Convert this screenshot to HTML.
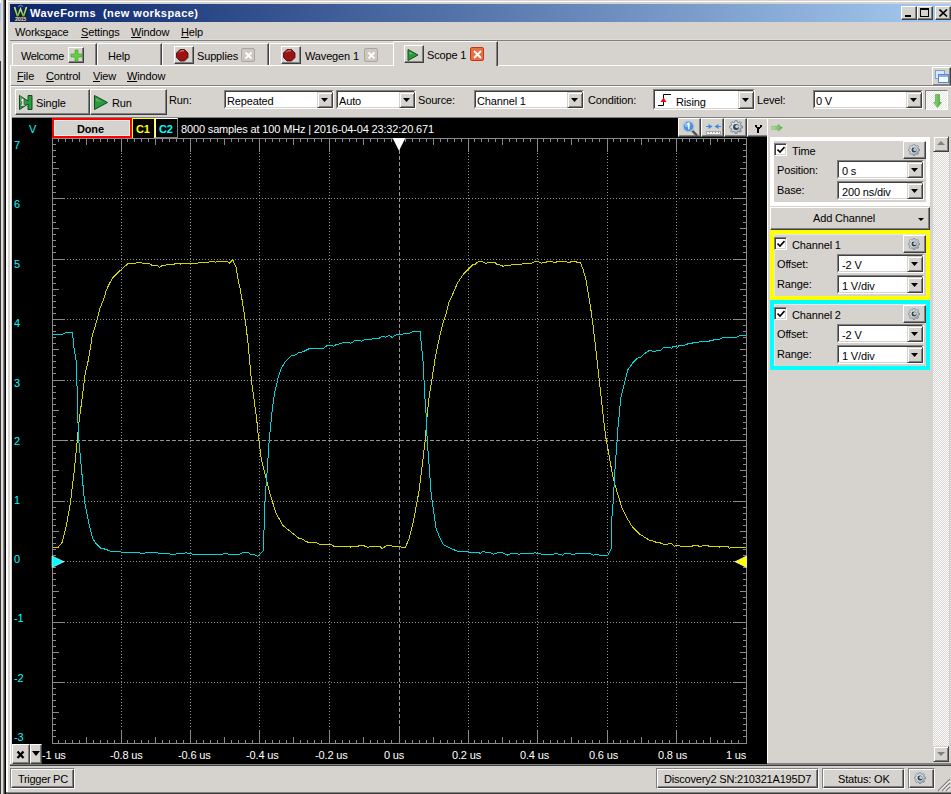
<!DOCTYPE html><html><head><meta charset="utf-8"><style>
*{margin:0;padding:0;box-sizing:border-box}
html,body{width:951px;height:794px;overflow:hidden;background:#d6d3ce;font-family:"Liberation Sans",sans-serif;font-size:11px}
body>div,body>svg{position:absolute}
.t{position:absolute;white-space:pre;line-height:13px;font-size:11px;letter-spacing:-0.15px}
.btn{position:absolute;background:#d6d3ce;border:1px solid;border-color:#fff #404040 #404040 #fff;box-shadow:inset -1px -1px #808080}
.btn2{position:absolute;background:#d6d3ce;border:1px solid;border-color:#d6d3ce #404040 #404040 #d6d3ce;box-shadow:inset 1px 1px #fff,inset -1px -1px #808080}
.cmb{position:absolute;background:#d6d3ce;border:1px solid;border-color:#808080 #fff #fff #808080}
.cin{position:absolute;left:0;top:0;background:#fff;border-left:1px solid #404040;border-top:1px solid #404040}
.dbtn{position:absolute;right:0;bottom:0;background:#d6d3ce;border:1px solid;border-color:#d6d3ce #404040 #404040 #d6d3ce;box-shadow:inset 1px 1px #fff,inset -1px -1px #808080}
.tri{position:absolute;left:3px;top:5px;width:0;height:0;border-left:4px solid transparent;border-right:4px solid transparent;border-top:4px solid #000}
u{text-decoration:underline;text-underline-offset:1px;text-decoration-skip-ink:none}
</style></head><body>

<div style="left:0px;top:0px;width:1px;height:3px;background:#fff;"></div>
<div style="left:0px;top:3px;width:1px;height:18px;background:#a6caf0;"></div>
<div style="left:0px;top:21px;width:1px;height:40px;background:#d6d3ce;"></div>
<div style="left:0px;top:61px;width:1px;height:733px;background:#383838;"></div>
<div style="left:1px;top:0px;width:2px;height:794px;background:#e0ddd8;"></div>
<div style="left:3px;top:0px;width:1px;height:794px;background:#808080;"></div>
<div style="left:4px;top:0px;width:1px;height:794px;background:#404040;"></div>
<div style="left:5px;top:0px;width:1px;height:794px;background:#000;"></div>
<div style="left:6px;top:0px;width:2px;height:794px;background:#fff;"></div>
<div style="left:8px;top:0px;width:2px;height:794px;background:#d6d3ce;"></div>
<div style="left:6px;top:1px;width:945px;height:1px;background:#fff;"></div>
<div style="left:10px;top:4px;width:941px;height:18px;background:linear-gradient(to right,#0a246a,#a6caf0);"></div>
<svg style="left:12px;top:4px" width="17" height="18" viewBox="0 0 17 18">
<defs><linearGradient id="wg" x1="0" y1="0" x2="0" y2="1"><stop offset="0" stop-color="#d8f0a0"/><stop offset="1" stop-color="#60b040"/></linearGradient></defs>
<path d="M2 3 L5.5 14 L8.5 6 L11.5 14 L15 3" stroke="#1a1a1a" stroke-width="3" fill="none" stroke-linejoin="round"/>
<path d="M2.5 3 L5.5 12.5 L8.5 5 L11.5 12.5 L14.5 3" stroke="url(#wg)" stroke-width="1.6" fill="none"/>
<path d="M6 2.5 Q8.5 0 11 2.5" stroke="#909090" stroke-width="1" fill="none"/>
<rect x="2" y="12.5" width="13" height="5" rx="2" fill="#1a1a1a"/>
<text x="8.5" y="17" font-size="5.5" font-family="Liberation Sans" font-weight="bold" fill="#e0e0e0" text-anchor="middle" letter-spacing="-0.3">2015</text>
</svg>
<div class="t" style="left:30px;top:7px;color:#fff;font-weight:bold;font-size:11px;letter-spacing:0.45px">WaveForms&nbsp; (new workspace)</div>
<div class="btn" style="left:901px;top:6px;width:16px;height:14px"><div style="position:absolute;left:3px;top:8px;width:6px;height:2px;background:#000"></div></div>
<div class="btn" style="left:917px;top:6px;width:16px;height:14px"><div style="position:absolute;left:2px;top:1px;width:9px;height:9px;border:1px solid #000;border-top-width:2px"></div></div>
<div class="btn" style="left:935px;top:6px;width:16px;height:14px"><svg style="position:absolute;left:3px;top:2px" width="9" height="8"><path d="M0.5 0.5 L8 7.5 M8 0.5 L0.5 7.5" stroke="#000" stroke-width="1.6"/></svg></div>
<div class="t" style="left:15px;top:26px;color:#000;font-size:11px;">Works<u>p</u>ace</div>
<div class="t" style="left:81px;top:26px;color:#000;font-size:11px;"><u>S</u>ettings</div>
<div class="t" style="left:131px;top:26px;color:#000;font-size:11px;"><u>W</u>indow</div>
<div class="t" style="left:181px;top:26px;color:#000;font-size:11px;"><u>H</u>elp</div>
<div style="left:10px;top:40px;width:941px;height:1px;background:#808080;"></div>
<div style="left:10px;top:39px;width:941px;height:1px;background:#dedbd6;"></div>
<div style="left:10px;top:41px;width:941px;height:1px;background:#dedbd6;"></div>
<div style="left:12px;top:43px;width:85px;height:22px;background:#d6d3ce;border-left:1px solid #fff;border-top:1px solid #fff;border-right:1px solid #404040;box-shadow:inset -1px 0 #808080;border-top-left-radius:2px"></div>
<div class="t" style="left:21px;top:50px;color:#000;font-size:11px;letter-spacing:-0.4px">Welcome</div>
<div class="btn" style="left:68px;top:47px;width:16px;height:16px"><svg style="position:absolute;left:1px;top:1px" width="13" height="13"><path d="M5 1 H8 V5 H12 V8 H8 V12 H5 V8 H1 V5 H5 Z" fill="#60d040" stroke="#40a020" stroke-width="0.6"/></svg></div>
<div style="left:97px;top:43px;width:65px;height:22px;background:#d6d3ce;border-left:1px solid #fff;border-top:1px solid #fff;border-right:1px solid #404040;box-shadow:inset -1px 0 #808080;border-top-left-radius:2px"></div>
<div class="t" style="left:108px;top:50px;color:#000;font-size:11px;">Help</div>
<div style="left:162px;top:43px;width:107px;height:22px;background:#d6d3ce;border-left:1px solid #fff;border-top:1px solid #fff;border-right:1px solid #404040;box-shadow:inset -1px 0 #808080;border-top-left-radius:2px"></div>
<div class="btn" style="left:174px;top:46px;width:20px;height:18px"><svg style="position:absolute;left:1px;top:2px" width="13" height="13"><path d="M4 0.5 H8.5 L12 4 V8.5 L8.5 12 H4 L0.5 8.5 V4 Z" fill="#9a1414" stroke="#3a0808" stroke-width="0.8"/><path d="M3.5 3 L5 1.8 H8" stroke="#e89090" stroke-width="1" fill="none"/></svg></div>
<div class="t" style="left:197px;top:50px;color:#000;font-size:11px;">Supplies</div>
<div style="left:241px;top:48px;width:14px;height:14px;background:#cdc9c1;border:1px solid #aaa69e;border-radius:2px"><svg style="position:absolute;left:2px;top:2px" width="9" height="9"><path d="M1.5 1.5 L7.5 7.5 M7.5 1.5 L1.5 7.5" stroke="#fff" stroke-width="1.8"/></svg></div>
<div style="left:269px;top:43px;width:125px;height:22px;background:#d6d3ce;border-left:1px solid #fff;border-top:1px solid #fff;border-top-left-radius:2px"></div>
<div class="btn" style="left:281px;top:46px;width:20px;height:18px"><svg style="position:absolute;left:1px;top:2px" width="13" height="13"><path d="M4 0.5 H8.5 L12 4 V8.5 L8.5 12 H4 L0.5 8.5 V4 Z" fill="#9a1414" stroke="#3a0808" stroke-width="0.8"/><path d="M3.5 3 L5 1.8 H8" stroke="#e89090" stroke-width="1" fill="none"/></svg></div>
<div class="t" style="left:305px;top:50px;color:#000;font-size:11px;">Wavegen 1</div>
<div style="left:364px;top:48px;width:14px;height:14px;background:#cdc9c1;border:1px solid #aaa69e;border-radius:2px"><svg style="position:absolute;left:2px;top:2px" width="9" height="9"><path d="M1.5 1.5 L7.5 7.5 M7.5 1.5 L1.5 7.5" stroke="#fff" stroke-width="1.8"/></svg></div>
<div style="left:10px;top:65px;width:941px;height:1px;background:#fff;"></div>
<div style="left:393px;top:41px;width:105px;height:25px;background:#d6d3ce;border-left:1px solid #fff;border-top:1px solid #fff;border-right:1px solid #404040;box-shadow:inset -1px 0 #808080;border-top-left-radius:2px"></div>
<div class="btn" style="left:404px;top:45px;width:20px;height:18px"><svg style="position:absolute;left:2px;top:3px" width="12" height="12"><path d="M1 0.5 L11 6 L1 11.5 Z" fill="#2a9a3a" stroke="#105020" stroke-width="1"/><path d="M2.5 3 L6 5 H2.5 Z" fill="#7ac88a"/></svg></div>
<div class="t" style="left:427px;top:49px;color:#000;font-size:11px;">Scope 1</div>
<div style="left:470px;top:47px;width:14px;height:14px;background:#e87040;border:1px solid #d03010;border-radius:2px"><svg style="position:absolute;left:2px;top:2px" width="9" height="9"><path d="M1 1 L8 8 M8 1 L1 8" stroke="#fff" stroke-width="2"/></svg></div>
<div style="left:10px;top:65px;width:1px;height:700px;background:#fff;"></div>
<div class="t" style="left:17px;top:70px;color:#000;font-size:11px;"><u>F</u>ile</div>
<div class="t" style="left:46px;top:70px;color:#000;font-size:11px;"><u>C</u>ontrol</div>
<div class="t" style="left:93px;top:70px;color:#000;font-size:11px;"><u>V</u>iew</div>
<div class="t" style="left:127px;top:70px;color:#000;font-size:11px;"><u>W</u>indow</div>
<div class="btn" style="left:932px;top:67px;width:19px;height:19px"><svg style="position:absolute;left:1px;top:1px" width="15" height="15"><rect x="1.5" y="1.5" width="9" height="8" fill="#dce8f8" stroke="#7aa0d8"/><rect x="4.5" y="5.5" width="10" height="8" fill="#f4f8ff" stroke="#5a88d0"/><rect x="5" y="6" width="9" height="2" fill="#8ab0e8"/></svg></div>
<div style="left:11px;top:85px;width:940px;height:1px;background:#808080;"></div>
<div style="left:11px;top:86px;width:940px;height:1px;background:#fff;"></div>
<div class="btn" style="left:15px;top:89px;width:75px;height:26px;"></div>
<svg style="left:18px;top:94px" width="16" height="17"><path d="M1.5 1.5 L10 7 V1.5 H14 V15.5 H10 V10 L1.5 15.5 Z" fill="#2a9a3a" stroke="#104a20" stroke-width="1"/><path d="M2 2 L6 5 V9 H2 Z" fill="#6cc07a" opacity="0.7"/><path d="M2.5 6 L4.5 4.5 H5.8 V10.5 H7 V12 H2.5 V10.5 H3.8 V7 L2.5 7.5 Z" fill="#f4f4f4" stroke="#304030" stroke-width="0.5"/></svg>
<div class="t" style="left:36px;top:97px;color:#000;font-size:11px;">Single</div>
<div class="btn" style="left:90px;top:89px;width:77px;height:26px;"></div>
<svg style="left:93px;top:94px" width="16" height="17"><path d="M1.5 1.5 L14.5 8.5 L1.5 15.5 Z" fill="#2a9a3a" stroke="#104a20" stroke-width="1"/><path d="M3 4 L9 7.5 L3 7.5 Z" fill="#70c080" opacity="0.6"/></svg>
<div class="t" style="left:112px;top:97px;color:#000;font-size:11px;">Run</div>
<div class="t" style="left:169px;top:94px;color:#000;font-size:11px;">Run:</div>
<div class="cmb" style="left:224px;top:90px;width:110px;height:19px;"><div class="cin" style="width:107px;height:16px"></div><div class="dbtn" style="width:16px;height:16px"><svg style="position:absolute;left:3px;top:5px" width="7" height="4"><path d="M0 0H7L3.5 4Z" fill="#000"/></svg></div><div class="t" style="left:2px;top:4px">Repeated</div></div>
<div class="cmb" style="left:336px;top:90px;width:80px;height:19px;"><div class="cin" style="width:77px;height:16px"></div><div class="dbtn" style="width:16px;height:16px"><svg style="position:absolute;left:3px;top:5px" width="7" height="4"><path d="M0 0H7L3.5 4Z" fill="#000"/></svg></div><div class="t" style="left:2px;top:4px">Auto</div></div>
<div class="t" style="left:418px;top:94px;color:#000;font-size:11px;">Source:</div>
<div class="cmb" style="left:474px;top:90px;width:110px;height:19px;"><div class="cin" style="width:107px;height:16px"></div><div class="dbtn" style="width:16px;height:16px"><svg style="position:absolute;left:3px;top:5px" width="7" height="4"><path d="M0 0H7L3.5 4Z" fill="#000"/></svg></div><div class="t" style="left:2px;top:4px">Channel 1</div></div>
<div class="t" style="left:588px;top:94px;color:#000;font-size:11px;">Condition:</div>
<div class="cmb" style="left:653px;top:89px;width:102px;height:21px;"><div class="cin" style="width:99px;height:18px"></div><div class="dbtn" style="width:16px;height:18px"><svg style="position:absolute;left:3px;top:6px" width="7" height="4"><path d="M0 0H7L3.5 4Z" fill="#000"/></svg></div><div class="t" style="left:2px;top:6px"><span style="display:inline-block;width:20px"></span>Rising</div></div>
<svg style="left:657px;top:93px" width="17" height="14"><path d="M1 12.5 H6.5 V1.5 H14" stroke="#000" stroke-width="1" fill="none"/><path d="M6.5 4.5 L9.5 9 H3.5 Z" fill="#f00"/></svg>
<div class="t" style="left:757px;top:94px;color:#000;font-size:11px;">Level:</div>
<div class="cmb" style="left:813px;top:90px;width:110px;height:19px;"><div class="cin" style="width:107px;height:16px"></div><div class="dbtn" style="width:16px;height:16px"><svg style="position:absolute;left:3px;top:5px" width="7" height="4"><path d="M0 0H7L3.5 4Z" fill="#000"/></svg></div><div class="t" style="left:2px;top:4px">0 V</div></div>
<div style="left:925px;top:90px;width:23px;height:20px;border:1px solid;border-color:#808080 #fff #fff #808080;background-color:#e8e6e0;background-image:linear-gradient(45deg,#fff 25%,transparent 25%,transparent 75%,#fff 75%),linear-gradient(45deg,#fff 25%,transparent 25%,transparent 75%,#fff 75%);background-size:2px 2px;background-position:0 0,1px 1px"><svg style="position:absolute;left:7px;top:3px" width="9" height="15"><defs><linearGradient id="ga" x1="0" x2="1"><stop offset="0" stop-color="#98d888"/><stop offset="1" stop-color="#48a838"/></linearGradient></defs><path d="M2.5 0.5 H6.5 V8.5 H8.5 L4.5 13.5 L0.5 8.5 H2.5 Z" fill="url(#ga)" stroke="#48a040" stroke-width="0.6"/></svg></div>
<div style="left:12px;top:117px;width:939px;height:1px;background:#808080;"></div>
<div style="left:12px;top:118px;width:755px;height:646px;background:#000;"></div>
<div style="left:52px;top:118px;width:80px;height:20px;border:2px solid #f00;background:#d6d3ce;box-shadow:inset 1px 1px #e4f0f0,inset -1px -1px #e4f0f0"></div>
<div class="t" style="left:77px;top:123px;color:#000;font-weight:bold;font-size:11px;">Done</div>
<div style="left:132px;top:118px;width:23px;height:21px;border:1px solid #ff0;background:#000"></div>
<div class="t" style="left:136px;top:123px;color:#ff0;font-weight:bold;font-size:11px;">C1</div>
<div style="left:155px;top:118px;width:23px;height:20px;border:1px solid;border-color:#fff #808080 #808080 #fff;background:#000"></div>
<div class="t" style="left:159px;top:123px;color:#0ff;font-weight:bold;font-size:11px;">C2</div>
<div class="t" style="left:181px;top:123px;color:#fff;font-size:11px;">8000 samples at 100 MHz | 2016-04-04 23:32:20.671</div>
<div class="btn" style="left:678px;top:118px;width:23px;height:19px"><svg style="position:absolute;left:3px;top:1px" width="17" height="17"><path d="M10 10.5 L14.5 15" stroke="#505050" stroke-width="2.4" stroke-linecap="round"/><circle cx="6.5" cy="6.5" r="5.4" fill="#4a90e0" stroke="#b8c4d0" stroke-width="1.3"/><ellipse cx="5.5" cy="5" rx="3" ry="2.2" fill="#a8d0ff" opacity="0.7"/><path d="M5 4.2 L6.8 3.2 V9.5" stroke="#fff" stroke-width="1.3" fill="none"/></svg></div>
<div class="btn" style="left:701px;top:118px;width:23px;height:19px"><svg style="position:absolute;left:3px;top:3px" width="17" height="14"><path d="M1 4.5 H4" stroke="#3a8ae8" stroke-width="1"/><path d="M13 4.5 H16" stroke="#3a8ae8" stroke-width="1"/><path d="M7.5 4.5 L3.5 2 V7 Z M9.5 4.5 L13.5 2 V7 Z" fill="#3a8ae8"/><rect x="1.5" y="9.5" width="14" height="3" fill="#f4f4f4" stroke="#a8a8a8" stroke-width="1"/><path d="M4.5 10 V11 M7.5 10 V11 M10.5 10 V11 M13.5 10 V11" stroke="#909090"/></svg></div>
<div class="btn" style="left:724px;top:118px;width:23px;height:19px"><svg style="position:absolute;left:4px;top:1px" width="14" height="14" viewBox="0 0 13 13"><defs><linearGradient id="gg" x1="0" y1="0" x2="1" y2="1"><stop offset="0" stop-color="#f4f6f8"/><stop offset="0.6" stop-color="#c4ccd4"/><stop offset="1" stop-color="#7a8896"/></linearGradient></defs><path d="M10.78 5.10 L12.66 5.78 L12.66 7.22 L10.78 7.90 L10.51 8.53 L11.36 10.35 L10.35 11.36 L8.53 10.51 L7.90 10.78 L7.22 12.66 L5.78 12.66 L5.10 10.78 L4.47 10.51 L2.65 11.36 L1.64 10.35 L2.49 8.53 L2.22 7.90 L0.34 7.22 L0.34 5.78 L2.22 5.10 L2.49 4.47 L1.64 2.65 L2.65 1.64 L4.47 2.49 L5.10 2.22 L5.78 0.34 L7.22 0.34 L7.90 2.22 L8.53 2.49 L10.35 1.64 L11.36 2.65 L10.51 4.47Z" fill="url(#gg)" stroke="#6a7a88" stroke-width="0.8"/><circle cx="6.5" cy="6.5" r="2.7" fill="#2e4252"/><circle cx="7.4" cy="6.0" r="1.7" fill="#c8d0c4"/></svg></div>
<div style="left:747px;top:118px;width:20px;height:19px;background:#d6d3ce;border-left:1px solid #fff;border-top:1px solid #fff;border-bottom:1px solid #404040;box-shadow:inset 0 -1px #808080"><svg style="position:absolute;left:7px;top:6px" width="7" height="8" shape-rendering="crispEdges"><path d="M0 0H2V2H1Z M5 0H7V2H6Z" fill="#000"/><rect x="1" y="2" width="5" height="1" fill="#000"/><rect x="2" y="3" width="3" height="1" fill="#000"/><rect x="2" y="3" width="2" height="5" fill="#000"/><rect x="0" y="0" width="2" height="2" fill="#000"/><rect x="5" y="0" width="2" height="2" fill="#000"/></svg></div>
<svg style="left:771px;top:124px" width="13" height="8"><defs><linearGradient id="ar" x1="0" x2="1"><stop offset="0" stop-color="#b8e4a8"/><stop offset="1" stop-color="#58b048"/></linearGradient></defs><path d="M0.5 2.3 H7 V0.3 L11.5 3.8 L7 7.3 V5.3 H0.5 Z" fill="url(#ar)" stroke="#68b058" stroke-width="0.5"/></svg>
<svg style="left:0;top:0" width="951" height="794" shape-rendering="crispEdges"><rect x="52" y="138" width="1" height="606" fill="#8a8a8e"/><rect x="746" y="138" width="1" height="606" fill="#8a8a8e"/><rect x="52" y="138" width="695" height="1" fill="#8a8a8e"/><rect x="52" y="743" width="695" height="1" fill="#8a8a8e"/><rect x="53" y="144" width="3" height="1" fill="#8a8a8e"/><rect x="743" y="144" width="3" height="1" fill="#8a8a8e"/><rect x="53" y="150" width="3" height="1" fill="#8a8a8e"/><rect x="743" y="150" width="3" height="1" fill="#8a8a8e"/><rect x="53" y="156" width="3" height="1" fill="#8a8a8e"/><rect x="743" y="156" width="3" height="1" fill="#8a8a8e"/><rect x="53" y="162" width="3" height="1" fill="#8a8a8e"/><rect x="743" y="162" width="3" height="1" fill="#8a8a8e"/><rect x="53" y="168" width="6" height="1" fill="#8a8a8e"/><rect x="740" y="168" width="6" height="1" fill="#8a8a8e"/><rect x="53" y="174" width="3" height="1" fill="#8a8a8e"/><rect x="743" y="174" width="3" height="1" fill="#8a8a8e"/><rect x="53" y="180" width="3" height="1" fill="#8a8a8e"/><rect x="743" y="180" width="3" height="1" fill="#8a8a8e"/><rect x="53" y="186" width="3" height="1" fill="#8a8a8e"/><rect x="743" y="186" width="3" height="1" fill="#8a8a8e"/><rect x="53" y="192" width="3" height="1" fill="#8a8a8e"/><rect x="743" y="192" width="3" height="1" fill="#8a8a8e"/><rect x="53" y="198" width="12" height="1" fill="#8a8a8e"/><rect x="734" y="198" width="12" height="1" fill="#8a8a8e"/><rect x="53" y="204" width="3" height="1" fill="#8a8a8e"/><rect x="743" y="204" width="3" height="1" fill="#8a8a8e"/><rect x="53" y="210" width="3" height="1" fill="#8a8a8e"/><rect x="743" y="210" width="3" height="1" fill="#8a8a8e"/><rect x="53" y="216" width="3" height="1" fill="#8a8a8e"/><rect x="743" y="216" width="3" height="1" fill="#8a8a8e"/><rect x="53" y="222" width="3" height="1" fill="#8a8a8e"/><rect x="743" y="222" width="3" height="1" fill="#8a8a8e"/><rect x="53" y="228" width="6" height="1" fill="#8a8a8e"/><rect x="740" y="228" width="6" height="1" fill="#8a8a8e"/><rect x="53" y="234" width="3" height="1" fill="#8a8a8e"/><rect x="743" y="234" width="3" height="1" fill="#8a8a8e"/><rect x="53" y="240" width="3" height="1" fill="#8a8a8e"/><rect x="743" y="240" width="3" height="1" fill="#8a8a8e"/><rect x="53" y="246" width="3" height="1" fill="#8a8a8e"/><rect x="743" y="246" width="3" height="1" fill="#8a8a8e"/><rect x="53" y="252" width="3" height="1" fill="#8a8a8e"/><rect x="743" y="252" width="3" height="1" fill="#8a8a8e"/><rect x="53" y="259" width="12" height="1" fill="#8a8a8e"/><rect x="734" y="259" width="12" height="1" fill="#8a8a8e"/><rect x="53" y="265" width="3" height="1" fill="#8a8a8e"/><rect x="743" y="265" width="3" height="1" fill="#8a8a8e"/><rect x="53" y="271" width="3" height="1" fill="#8a8a8e"/><rect x="743" y="271" width="3" height="1" fill="#8a8a8e"/><rect x="53" y="277" width="3" height="1" fill="#8a8a8e"/><rect x="743" y="277" width="3" height="1" fill="#8a8a8e"/><rect x="53" y="283" width="3" height="1" fill="#8a8a8e"/><rect x="743" y="283" width="3" height="1" fill="#8a8a8e"/><rect x="53" y="289" width="6" height="1" fill="#8a8a8e"/><rect x="740" y="289" width="6" height="1" fill="#8a8a8e"/><rect x="53" y="295" width="3" height="1" fill="#8a8a8e"/><rect x="743" y="295" width="3" height="1" fill="#8a8a8e"/><rect x="53" y="301" width="3" height="1" fill="#8a8a8e"/><rect x="743" y="301" width="3" height="1" fill="#8a8a8e"/><rect x="53" y="307" width="3" height="1" fill="#8a8a8e"/><rect x="743" y="307" width="3" height="1" fill="#8a8a8e"/><rect x="53" y="313" width="3" height="1" fill="#8a8a8e"/><rect x="743" y="313" width="3" height="1" fill="#8a8a8e"/><rect x="53" y="319" width="12" height="1" fill="#8a8a8e"/><rect x="734" y="319" width="12" height="1" fill="#8a8a8e"/><rect x="53" y="325" width="3" height="1" fill="#8a8a8e"/><rect x="743" y="325" width="3" height="1" fill="#8a8a8e"/><rect x="53" y="331" width="3" height="1" fill="#8a8a8e"/><rect x="743" y="331" width="3" height="1" fill="#8a8a8e"/><rect x="53" y="337" width="3" height="1" fill="#8a8a8e"/><rect x="743" y="337" width="3" height="1" fill="#8a8a8e"/><rect x="53" y="343" width="3" height="1" fill="#8a8a8e"/><rect x="743" y="343" width="3" height="1" fill="#8a8a8e"/><rect x="53" y="349" width="6" height="1" fill="#8a8a8e"/><rect x="740" y="349" width="6" height="1" fill="#8a8a8e"/><rect x="53" y="355" width="3" height="1" fill="#8a8a8e"/><rect x="743" y="355" width="3" height="1" fill="#8a8a8e"/><rect x="53" y="361" width="3" height="1" fill="#8a8a8e"/><rect x="743" y="361" width="3" height="1" fill="#8a8a8e"/><rect x="53" y="367" width="3" height="1" fill="#8a8a8e"/><rect x="743" y="367" width="3" height="1" fill="#8a8a8e"/><rect x="53" y="373" width="3" height="1" fill="#8a8a8e"/><rect x="743" y="373" width="3" height="1" fill="#8a8a8e"/><rect x="53" y="380" width="12" height="1" fill="#8a8a8e"/><rect x="734" y="380" width="12" height="1" fill="#8a8a8e"/><rect x="53" y="386" width="3" height="1" fill="#8a8a8e"/><rect x="743" y="386" width="3" height="1" fill="#8a8a8e"/><rect x="53" y="392" width="3" height="1" fill="#8a8a8e"/><rect x="743" y="392" width="3" height="1" fill="#8a8a8e"/><rect x="53" y="398" width="3" height="1" fill="#8a8a8e"/><rect x="743" y="398" width="3" height="1" fill="#8a8a8e"/><rect x="53" y="404" width="3" height="1" fill="#8a8a8e"/><rect x="743" y="404" width="3" height="1" fill="#8a8a8e"/><rect x="53" y="410" width="6" height="1" fill="#8a8a8e"/><rect x="740" y="410" width="6" height="1" fill="#8a8a8e"/><rect x="53" y="416" width="3" height="1" fill="#8a8a8e"/><rect x="743" y="416" width="3" height="1" fill="#8a8a8e"/><rect x="53" y="422" width="3" height="1" fill="#8a8a8e"/><rect x="743" y="422" width="3" height="1" fill="#8a8a8e"/><rect x="53" y="428" width="3" height="1" fill="#8a8a8e"/><rect x="743" y="428" width="3" height="1" fill="#8a8a8e"/><rect x="53" y="434" width="3" height="1" fill="#8a8a8e"/><rect x="743" y="434" width="3" height="1" fill="#8a8a8e"/><rect x="53" y="440" width="12" height="1" fill="#8a8a8e"/><rect x="734" y="440" width="12" height="1" fill="#8a8a8e"/><rect x="53" y="446" width="3" height="1" fill="#8a8a8e"/><rect x="743" y="446" width="3" height="1" fill="#8a8a8e"/><rect x="53" y="452" width="3" height="1" fill="#8a8a8e"/><rect x="743" y="452" width="3" height="1" fill="#8a8a8e"/><rect x="53" y="458" width="3" height="1" fill="#8a8a8e"/><rect x="743" y="458" width="3" height="1" fill="#8a8a8e"/><rect x="53" y="464" width="3" height="1" fill="#8a8a8e"/><rect x="743" y="464" width="3" height="1" fill="#8a8a8e"/><rect x="53" y="470" width="6" height="1" fill="#8a8a8e"/><rect x="740" y="470" width="6" height="1" fill="#8a8a8e"/><rect x="53" y="476" width="3" height="1" fill="#8a8a8e"/><rect x="743" y="476" width="3" height="1" fill="#8a8a8e"/><rect x="53" y="482" width="3" height="1" fill="#8a8a8e"/><rect x="743" y="482" width="3" height="1" fill="#8a8a8e"/><rect x="53" y="488" width="3" height="1" fill="#8a8a8e"/><rect x="743" y="488" width="3" height="1" fill="#8a8a8e"/><rect x="53" y="494" width="3" height="1" fill="#8a8a8e"/><rect x="743" y="494" width="3" height="1" fill="#8a8a8e"/><rect x="53" y="501" width="12" height="1" fill="#8a8a8e"/><rect x="734" y="501" width="12" height="1" fill="#8a8a8e"/><rect x="53" y="507" width="3" height="1" fill="#8a8a8e"/><rect x="743" y="507" width="3" height="1" fill="#8a8a8e"/><rect x="53" y="513" width="3" height="1" fill="#8a8a8e"/><rect x="743" y="513" width="3" height="1" fill="#8a8a8e"/><rect x="53" y="519" width="3" height="1" fill="#8a8a8e"/><rect x="743" y="519" width="3" height="1" fill="#8a8a8e"/><rect x="53" y="525" width="3" height="1" fill="#8a8a8e"/><rect x="743" y="525" width="3" height="1" fill="#8a8a8e"/><rect x="53" y="531" width="6" height="1" fill="#8a8a8e"/><rect x="740" y="531" width="6" height="1" fill="#8a8a8e"/><rect x="53" y="537" width="3" height="1" fill="#8a8a8e"/><rect x="743" y="537" width="3" height="1" fill="#8a8a8e"/><rect x="53" y="543" width="3" height="1" fill="#8a8a8e"/><rect x="743" y="543" width="3" height="1" fill="#8a8a8e"/><rect x="53" y="549" width="3" height="1" fill="#8a8a8e"/><rect x="743" y="549" width="3" height="1" fill="#8a8a8e"/><rect x="53" y="555" width="3" height="1" fill="#8a8a8e"/><rect x="743" y="555" width="3" height="1" fill="#8a8a8e"/><rect x="53" y="561" width="12" height="1" fill="#8a8a8e"/><rect x="734" y="561" width="12" height="1" fill="#8a8a8e"/><rect x="53" y="567" width="3" height="1" fill="#8a8a8e"/><rect x="743" y="567" width="3" height="1" fill="#8a8a8e"/><rect x="53" y="573" width="3" height="1" fill="#8a8a8e"/><rect x="743" y="573" width="3" height="1" fill="#8a8a8e"/><rect x="53" y="579" width="3" height="1" fill="#8a8a8e"/><rect x="743" y="579" width="3" height="1" fill="#8a8a8e"/><rect x="53" y="585" width="3" height="1" fill="#8a8a8e"/><rect x="743" y="585" width="3" height="1" fill="#8a8a8e"/><rect x="53" y="591" width="6" height="1" fill="#8a8a8e"/><rect x="740" y="591" width="6" height="1" fill="#8a8a8e"/><rect x="53" y="597" width="3" height="1" fill="#8a8a8e"/><rect x="743" y="597" width="3" height="1" fill="#8a8a8e"/><rect x="53" y="603" width="3" height="1" fill="#8a8a8e"/><rect x="743" y="603" width="3" height="1" fill="#8a8a8e"/><rect x="53" y="609" width="3" height="1" fill="#8a8a8e"/><rect x="743" y="609" width="3" height="1" fill="#8a8a8e"/><rect x="53" y="615" width="3" height="1" fill="#8a8a8e"/><rect x="743" y="615" width="3" height="1" fill="#8a8a8e"/><rect x="53" y="622" width="12" height="1" fill="#8a8a8e"/><rect x="734" y="622" width="12" height="1" fill="#8a8a8e"/><rect x="53" y="628" width="3" height="1" fill="#8a8a8e"/><rect x="743" y="628" width="3" height="1" fill="#8a8a8e"/><rect x="53" y="634" width="3" height="1" fill="#8a8a8e"/><rect x="743" y="634" width="3" height="1" fill="#8a8a8e"/><rect x="53" y="640" width="3" height="1" fill="#8a8a8e"/><rect x="743" y="640" width="3" height="1" fill="#8a8a8e"/><rect x="53" y="646" width="3" height="1" fill="#8a8a8e"/><rect x="743" y="646" width="3" height="1" fill="#8a8a8e"/><rect x="53" y="652" width="6" height="1" fill="#8a8a8e"/><rect x="740" y="652" width="6" height="1" fill="#8a8a8e"/><rect x="53" y="658" width="3" height="1" fill="#8a8a8e"/><rect x="743" y="658" width="3" height="1" fill="#8a8a8e"/><rect x="53" y="664" width="3" height="1" fill="#8a8a8e"/><rect x="743" y="664" width="3" height="1" fill="#8a8a8e"/><rect x="53" y="670" width="3" height="1" fill="#8a8a8e"/><rect x="743" y="670" width="3" height="1" fill="#8a8a8e"/><rect x="53" y="676" width="3" height="1" fill="#8a8a8e"/><rect x="743" y="676" width="3" height="1" fill="#8a8a8e"/><rect x="53" y="682" width="12" height="1" fill="#8a8a8e"/><rect x="734" y="682" width="12" height="1" fill="#8a8a8e"/><rect x="53" y="688" width="3" height="1" fill="#8a8a8e"/><rect x="743" y="688" width="3" height="1" fill="#8a8a8e"/><rect x="53" y="694" width="3" height="1" fill="#8a8a8e"/><rect x="743" y="694" width="3" height="1" fill="#8a8a8e"/><rect x="53" y="700" width="3" height="1" fill="#8a8a8e"/><rect x="743" y="700" width="3" height="1" fill="#8a8a8e"/><rect x="53" y="706" width="3" height="1" fill="#8a8a8e"/><rect x="743" y="706" width="3" height="1" fill="#8a8a8e"/><rect x="53" y="712" width="6" height="1" fill="#8a8a8e"/><rect x="740" y="712" width="6" height="1" fill="#8a8a8e"/><rect x="53" y="718" width="3" height="1" fill="#8a8a8e"/><rect x="743" y="718" width="3" height="1" fill="#8a8a8e"/><rect x="53" y="724" width="3" height="1" fill="#8a8a8e"/><rect x="743" y="724" width="3" height="1" fill="#8a8a8e"/><rect x="53" y="730" width="3" height="1" fill="#8a8a8e"/><rect x="743" y="730" width="3" height="1" fill="#8a8a8e"/><rect x="53" y="736" width="3" height="1" fill="#8a8a8e"/><rect x="743" y="736" width="3" height="1" fill="#8a8a8e"/><rect x="58" y="139" width="1" height="3" fill="#8a8a8e"/><rect x="58" y="740" width="1" height="3" fill="#8a8a8e"/><rect x="65" y="139" width="1" height="3" fill="#8a8a8e"/><rect x="65" y="740" width="1" height="3" fill="#8a8a8e"/><rect x="72" y="139" width="1" height="3" fill="#8a8a8e"/><rect x="72" y="740" width="1" height="3" fill="#8a8a8e"/><rect x="79" y="139" width="1" height="3" fill="#8a8a8e"/><rect x="79" y="740" width="1" height="3" fill="#8a8a8e"/><rect x="86" y="139" width="1" height="6" fill="#8a8a8e"/><rect x="86" y="737" width="1" height="6" fill="#8a8a8e"/><rect x="93" y="139" width="1" height="3" fill="#8a8a8e"/><rect x="93" y="740" width="1" height="3" fill="#8a8a8e"/><rect x="100" y="139" width="1" height="3" fill="#8a8a8e"/><rect x="100" y="740" width="1" height="3" fill="#8a8a8e"/><rect x="107" y="139" width="1" height="3" fill="#8a8a8e"/><rect x="107" y="740" width="1" height="3" fill="#8a8a8e"/><rect x="114" y="139" width="1" height="3" fill="#8a8a8e"/><rect x="114" y="740" width="1" height="3" fill="#8a8a8e"/><rect x="121" y="139" width="1" height="13" fill="#8a8a8e"/><rect x="121" y="730" width="1" height="13" fill="#8a8a8e"/><rect x="127" y="139" width="1" height="3" fill="#8a8a8e"/><rect x="127" y="740" width="1" height="3" fill="#8a8a8e"/><rect x="134" y="139" width="1" height="3" fill="#8a8a8e"/><rect x="134" y="740" width="1" height="3" fill="#8a8a8e"/><rect x="141" y="139" width="1" height="3" fill="#8a8a8e"/><rect x="141" y="740" width="1" height="3" fill="#8a8a8e"/><rect x="148" y="139" width="1" height="3" fill="#8a8a8e"/><rect x="148" y="740" width="1" height="3" fill="#8a8a8e"/><rect x="155" y="139" width="1" height="6" fill="#8a8a8e"/><rect x="155" y="737" width="1" height="6" fill="#8a8a8e"/><rect x="162" y="139" width="1" height="3" fill="#8a8a8e"/><rect x="162" y="740" width="1" height="3" fill="#8a8a8e"/><rect x="169" y="139" width="1" height="3" fill="#8a8a8e"/><rect x="169" y="740" width="1" height="3" fill="#8a8a8e"/><rect x="176" y="139" width="1" height="3" fill="#8a8a8e"/><rect x="176" y="740" width="1" height="3" fill="#8a8a8e"/><rect x="183" y="139" width="1" height="3" fill="#8a8a8e"/><rect x="183" y="740" width="1" height="3" fill="#8a8a8e"/><rect x="190" y="139" width="1" height="13" fill="#8a8a8e"/><rect x="190" y="730" width="1" height="13" fill="#8a8a8e"/><rect x="196" y="139" width="1" height="3" fill="#8a8a8e"/><rect x="196" y="740" width="1" height="3" fill="#8a8a8e"/><rect x="203" y="139" width="1" height="3" fill="#8a8a8e"/><rect x="203" y="740" width="1" height="3" fill="#8a8a8e"/><rect x="210" y="139" width="1" height="3" fill="#8a8a8e"/><rect x="210" y="740" width="1" height="3" fill="#8a8a8e"/><rect x="217" y="139" width="1" height="3" fill="#8a8a8e"/><rect x="217" y="740" width="1" height="3" fill="#8a8a8e"/><rect x="224" y="139" width="1" height="6" fill="#8a8a8e"/><rect x="224" y="737" width="1" height="6" fill="#8a8a8e"/><rect x="231" y="139" width="1" height="3" fill="#8a8a8e"/><rect x="231" y="740" width="1" height="3" fill="#8a8a8e"/><rect x="238" y="139" width="1" height="3" fill="#8a8a8e"/><rect x="238" y="740" width="1" height="3" fill="#8a8a8e"/><rect x="245" y="139" width="1" height="3" fill="#8a8a8e"/><rect x="245" y="740" width="1" height="3" fill="#8a8a8e"/><rect x="252" y="139" width="1" height="3" fill="#8a8a8e"/><rect x="252" y="740" width="1" height="3" fill="#8a8a8e"/><rect x="259" y="139" width="1" height="13" fill="#8a8a8e"/><rect x="259" y="730" width="1" height="13" fill="#8a8a8e"/><rect x="265" y="139" width="1" height="3" fill="#8a8a8e"/><rect x="265" y="740" width="1" height="3" fill="#8a8a8e"/><rect x="272" y="139" width="1" height="3" fill="#8a8a8e"/><rect x="272" y="740" width="1" height="3" fill="#8a8a8e"/><rect x="279" y="139" width="1" height="3" fill="#8a8a8e"/><rect x="279" y="740" width="1" height="3" fill="#8a8a8e"/><rect x="286" y="139" width="1" height="3" fill="#8a8a8e"/><rect x="286" y="740" width="1" height="3" fill="#8a8a8e"/><rect x="293" y="139" width="1" height="6" fill="#8a8a8e"/><rect x="293" y="737" width="1" height="6" fill="#8a8a8e"/><rect x="300" y="139" width="1" height="3" fill="#8a8a8e"/><rect x="300" y="740" width="1" height="3" fill="#8a8a8e"/><rect x="307" y="139" width="1" height="3" fill="#8a8a8e"/><rect x="307" y="740" width="1" height="3" fill="#8a8a8e"/><rect x="314" y="139" width="1" height="3" fill="#8a8a8e"/><rect x="314" y="740" width="1" height="3" fill="#8a8a8e"/><rect x="321" y="139" width="1" height="3" fill="#8a8a8e"/><rect x="321" y="740" width="1" height="3" fill="#8a8a8e"/><rect x="329" y="139" width="1" height="13" fill="#8a8a8e"/><rect x="329" y="730" width="1" height="13" fill="#8a8a8e"/><rect x="335" y="139" width="1" height="3" fill="#8a8a8e"/><rect x="335" y="740" width="1" height="3" fill="#8a8a8e"/><rect x="342" y="139" width="1" height="3" fill="#8a8a8e"/><rect x="342" y="740" width="1" height="3" fill="#8a8a8e"/><rect x="349" y="139" width="1" height="3" fill="#8a8a8e"/><rect x="349" y="740" width="1" height="3" fill="#8a8a8e"/><rect x="356" y="139" width="1" height="3" fill="#8a8a8e"/><rect x="356" y="740" width="1" height="3" fill="#8a8a8e"/><rect x="363" y="139" width="1" height="6" fill="#8a8a8e"/><rect x="363" y="737" width="1" height="6" fill="#8a8a8e"/><rect x="370" y="139" width="1" height="3" fill="#8a8a8e"/><rect x="370" y="740" width="1" height="3" fill="#8a8a8e"/><rect x="377" y="139" width="1" height="3" fill="#8a8a8e"/><rect x="377" y="740" width="1" height="3" fill="#8a8a8e"/><rect x="384" y="139" width="1" height="3" fill="#8a8a8e"/><rect x="384" y="740" width="1" height="3" fill="#8a8a8e"/><rect x="391" y="139" width="1" height="3" fill="#8a8a8e"/><rect x="391" y="740" width="1" height="3" fill="#8a8a8e"/><rect x="399" y="139" width="1" height="13" fill="#8a8a8e"/><rect x="399" y="730" width="1" height="13" fill="#8a8a8e"/><rect x="405" y="139" width="1" height="3" fill="#8a8a8e"/><rect x="405" y="740" width="1" height="3" fill="#8a8a8e"/><rect x="412" y="139" width="1" height="3" fill="#8a8a8e"/><rect x="412" y="740" width="1" height="3" fill="#8a8a8e"/><rect x="419" y="139" width="1" height="3" fill="#8a8a8e"/><rect x="419" y="740" width="1" height="3" fill="#8a8a8e"/><rect x="426" y="139" width="1" height="3" fill="#8a8a8e"/><rect x="426" y="740" width="1" height="3" fill="#8a8a8e"/><rect x="433" y="139" width="1" height="6" fill="#8a8a8e"/><rect x="433" y="737" width="1" height="6" fill="#8a8a8e"/><rect x="440" y="139" width="1" height="3" fill="#8a8a8e"/><rect x="440" y="740" width="1" height="3" fill="#8a8a8e"/><rect x="447" y="139" width="1" height="3" fill="#8a8a8e"/><rect x="447" y="740" width="1" height="3" fill="#8a8a8e"/><rect x="454" y="139" width="1" height="3" fill="#8a8a8e"/><rect x="454" y="740" width="1" height="3" fill="#8a8a8e"/><rect x="461" y="139" width="1" height="3" fill="#8a8a8e"/><rect x="461" y="740" width="1" height="3" fill="#8a8a8e"/><rect x="468" y="139" width="1" height="13" fill="#8a8a8e"/><rect x="468" y="730" width="1" height="13" fill="#8a8a8e"/><rect x="474" y="139" width="1" height="3" fill="#8a8a8e"/><rect x="474" y="740" width="1" height="3" fill="#8a8a8e"/><rect x="481" y="139" width="1" height="3" fill="#8a8a8e"/><rect x="481" y="740" width="1" height="3" fill="#8a8a8e"/><rect x="488" y="139" width="1" height="3" fill="#8a8a8e"/><rect x="488" y="740" width="1" height="3" fill="#8a8a8e"/><rect x="495" y="139" width="1" height="3" fill="#8a8a8e"/><rect x="495" y="740" width="1" height="3" fill="#8a8a8e"/><rect x="502" y="139" width="1" height="6" fill="#8a8a8e"/><rect x="502" y="737" width="1" height="6" fill="#8a8a8e"/><rect x="509" y="139" width="1" height="3" fill="#8a8a8e"/><rect x="509" y="740" width="1" height="3" fill="#8a8a8e"/><rect x="516" y="139" width="1" height="3" fill="#8a8a8e"/><rect x="516" y="740" width="1" height="3" fill="#8a8a8e"/><rect x="523" y="139" width="1" height="3" fill="#8a8a8e"/><rect x="523" y="740" width="1" height="3" fill="#8a8a8e"/><rect x="530" y="139" width="1" height="3" fill="#8a8a8e"/><rect x="530" y="740" width="1" height="3" fill="#8a8a8e"/><rect x="537" y="139" width="1" height="13" fill="#8a8a8e"/><rect x="537" y="730" width="1" height="13" fill="#8a8a8e"/><rect x="543" y="139" width="1" height="3" fill="#8a8a8e"/><rect x="543" y="740" width="1" height="3" fill="#8a8a8e"/><rect x="550" y="139" width="1" height="3" fill="#8a8a8e"/><rect x="550" y="740" width="1" height="3" fill="#8a8a8e"/><rect x="557" y="139" width="1" height="3" fill="#8a8a8e"/><rect x="557" y="740" width="1" height="3" fill="#8a8a8e"/><rect x="564" y="139" width="1" height="3" fill="#8a8a8e"/><rect x="564" y="740" width="1" height="3" fill="#8a8a8e"/><rect x="571" y="139" width="1" height="6" fill="#8a8a8e"/><rect x="571" y="737" width="1" height="6" fill="#8a8a8e"/><rect x="578" y="139" width="1" height="3" fill="#8a8a8e"/><rect x="578" y="740" width="1" height="3" fill="#8a8a8e"/><rect x="585" y="139" width="1" height="3" fill="#8a8a8e"/><rect x="585" y="740" width="1" height="3" fill="#8a8a8e"/><rect x="592" y="139" width="1" height="3" fill="#8a8a8e"/><rect x="592" y="740" width="1" height="3" fill="#8a8a8e"/><rect x="599" y="139" width="1" height="3" fill="#8a8a8e"/><rect x="599" y="740" width="1" height="3" fill="#8a8a8e"/><rect x="607" y="139" width="1" height="13" fill="#8a8a8e"/><rect x="607" y="730" width="1" height="13" fill="#8a8a8e"/><rect x="613" y="139" width="1" height="3" fill="#8a8a8e"/><rect x="613" y="740" width="1" height="3" fill="#8a8a8e"/><rect x="620" y="139" width="1" height="3" fill="#8a8a8e"/><rect x="620" y="740" width="1" height="3" fill="#8a8a8e"/><rect x="627" y="139" width="1" height="3" fill="#8a8a8e"/><rect x="627" y="740" width="1" height="3" fill="#8a8a8e"/><rect x="634" y="139" width="1" height="3" fill="#8a8a8e"/><rect x="634" y="740" width="1" height="3" fill="#8a8a8e"/><rect x="641" y="139" width="1" height="6" fill="#8a8a8e"/><rect x="641" y="737" width="1" height="6" fill="#8a8a8e"/><rect x="648" y="139" width="1" height="3" fill="#8a8a8e"/><rect x="648" y="740" width="1" height="3" fill="#8a8a8e"/><rect x="655" y="139" width="1" height="3" fill="#8a8a8e"/><rect x="655" y="740" width="1" height="3" fill="#8a8a8e"/><rect x="662" y="139" width="1" height="3" fill="#8a8a8e"/><rect x="662" y="740" width="1" height="3" fill="#8a8a8e"/><rect x="669" y="139" width="1" height="3" fill="#8a8a8e"/><rect x="669" y="740" width="1" height="3" fill="#8a8a8e"/><rect x="676" y="139" width="1" height="13" fill="#8a8a8e"/><rect x="676" y="730" width="1" height="13" fill="#8a8a8e"/><rect x="682" y="139" width="1" height="3" fill="#8a8a8e"/><rect x="682" y="740" width="1" height="3" fill="#8a8a8e"/><rect x="689" y="139" width="1" height="3" fill="#8a8a8e"/><rect x="689" y="740" width="1" height="3" fill="#8a8a8e"/><rect x="696" y="139" width="1" height="3" fill="#8a8a8e"/><rect x="696" y="740" width="1" height="3" fill="#8a8a8e"/><rect x="703" y="139" width="1" height="3" fill="#8a8a8e"/><rect x="703" y="740" width="1" height="3" fill="#8a8a8e"/><rect x="710" y="139" width="1" height="6" fill="#8a8a8e"/><rect x="710" y="737" width="1" height="6" fill="#8a8a8e"/><rect x="717" y="139" width="1" height="3" fill="#8a8a8e"/><rect x="717" y="740" width="1" height="3" fill="#8a8a8e"/><rect x="724" y="139" width="1" height="3" fill="#8a8a8e"/><rect x="724" y="740" width="1" height="3" fill="#8a8a8e"/><rect x="731" y="139" width="1" height="3" fill="#8a8a8e"/><rect x="731" y="740" width="1" height="3" fill="#8a8a8e"/><rect x="738" y="139" width="1" height="3" fill="#8a8a8e"/><rect x="738" y="740" width="1" height="3" fill="#8a8a8e"/><path d="M67 198.5H734" stroke="#939397" stroke-dasharray="1 2"/><path d="M67 259.5H734" stroke="#939397" stroke-dasharray="1 2"/><path d="M67 319.5H734" stroke="#939397" stroke-dasharray="1 2"/><path d="M67 380.5H734" stroke="#939397" stroke-dasharray="1 2"/><path d="M52 440.5H746" stroke="#939397" stroke-dasharray="4 2"/><path d="M67 501.5H734" stroke="#939397" stroke-dasharray="1 2"/><path d="M67 561.5H734" stroke="#939397" stroke-dasharray="1 2"/><path d="M67 622.5H734" stroke="#939397" stroke-dasharray="1 2"/><path d="M67 682.5H734" stroke="#939397" stroke-dasharray="1 2"/><path d="M121.5 153V729" stroke="#939397" stroke-dasharray="1 2"/><path d="M190.5 153V729" stroke="#939397" stroke-dasharray="1 2"/><path d="M259.5 153V729" stroke="#939397" stroke-dasharray="1 2"/><path d="M329.5 153V729" stroke="#939397" stroke-dasharray="1 2"/><path d="M399.5 138V743" stroke="#939397" stroke-dasharray="4 2"/><path d="M468.5 153V729" stroke="#939397" stroke-dasharray="1 2"/><path d="M537.5 153V729" stroke="#939397" stroke-dasharray="1 2"/><path d="M607.5 153V729" stroke="#939397" stroke-dasharray="1 2"/><path d="M676.5 153V729" stroke="#939397" stroke-dasharray="1 2"/><polyline points="52.5,547.2 58.2,547.2 62.3,542.3 66.4,525.1 70.5,502.2 74.5,468.6 77.7,435.7 79.0,421.9 80.2,413.0 82.1,397.9 84.0,382.8 85.3,372.7 87.8,362.7 90.3,348.8 92.2,335.6 94.1,330.0 97.9,316.7 99.7,309.2 104.2,297.9 106.0,291.0 109.2,284.0 112.3,278.3 120.5,270.2 124.1,267.1 128.2,263.3 135.7,263.3 137.1,262.3 141.2,262.3 142.6,263.3 148.7,263.3 152.1,265.3 156.9,265.3 159.6,267.5 162.4,265.3 166.5,265.0 167.2,264.4 174.0,264.4 174.7,263.3 179.5,263.3 180.2,264.4 181.5,263.3 197.9,263.3 198.6,262.3 208.9,262.3 209.5,261.2 214.3,261.2 215.7,262.6 216.4,261.2 226.6,261.2 229.4,263.3 232.8,259.8 236.2,267.8 238.2,280.0 240.3,289.6 242.6,302.9 245.3,320.5 247.9,341.7 251.4,380.4 254.1,399.8 256.7,419.2 258.1,434.2 261.2,458.4 266.2,478.5 270.2,494.6 276.3,513.8 283.3,525.9 288.4,529.9 298.4,538.0 302.9,539.3 305.9,541.5 308.8,542.4 315.5,542.4 319.1,544.1 330.9,544.1 333.9,546.3 350.1,546.3 350.8,547.4 351.5,546.3 358.1,546.3 359.6,545.2 363.3,545.2 364.8,546.3 368.5,547.4 369.9,546.3 379.5,546.3 382.4,548.6 386.9,545.2 391.3,545.2 392.7,546.3 400.1,546.3 401.6,547.4 405.3,547.4 409.0,539.0 413.1,522.8 416.1,506.7 419.1,490.6 422.1,466.4 425.2,440.2 427.2,415.0 429.2,396.0 432.2,377.9 435.2,357.8 437.2,347.7 442.3,325.5 445.3,316.5 449.3,301.3 452.3,295.3 457.4,283.2 463.4,274.1 473.5,264.1 475.5,264.1 478.5,261.4 481.6,261.4 485.6,263.5 490.0,262.3 494.8,262.3 496.8,264.4 500.3,265.0 503.4,266.4 505.0,265.3 510.5,265.3 511.9,264.4 521.4,264.4 522.8,263.3 531.7,263.3 535.1,261.2 537.8,261.2 541.3,263.3 542.6,262.6 546.0,262.3 547.4,261.2 551.5,261.2 553.6,262.3 556.3,262.3 557.0,261.2 565.2,261.2 567.2,262.3 570.0,262.3 571.3,261.2 575.4,261.2 576.8,262.3 580.2,262.3 583.0,269.1 585.7,278.7 587.7,290.0 590.9,309.7 593.5,329.1 596.1,352.0 598.8,376.6 601.4,399.5 604.1,424.2 606.1,439.2 609.1,455.3 612.2,473.4 615.2,485.5 618.2,495.6 622.2,508.7 626.3,516.8 632.3,526.8 639.4,533.9 649.4,540.3 653.2,541.0 656.3,542.4 659.5,542.6 663.1,544.2 667.9,544.2 668.9,543.4 671.0,543.4 674.7,546.5 676.3,545.2 679.4,545.2 680.5,546.3 692.1,546.3 692.6,545.5 697.8,545.5 698.9,546.3 701.5,546.3 702.6,545.5 707.8,545.5 708.9,546.3 718.9,546.3 719.6,547.4 720.5,546.3 727.8,546.3 729.4,548.4 730.4,547.4 746.0,547.4" fill="none" stroke="#d4d400" stroke-width="1" shape-rendering="crispEdges"/><polyline points="52.5,334.4 62.6,334.4 66.4,332.5 72.4,332.5 73.3,340.0 73.9,347.6 75.2,355.1 76.4,362.7 77.1,389.1 77.5,414.3 78.3,428.2 78.7,439.5 81.1,464.5 84.4,500.6 88.5,521.8 92.6,538.2 95.8,543.1 100.4,548.0 105.7,549.3 111.1,551.4 120.0,551.4 121.8,552.3 134.3,552.3 142.4,553.4 150.4,552.3 162.9,553.4 173.7,554.3 186.2,552.9 193.3,554.3 221.9,554.3 225.5,553.2 229.1,554.3 239.8,554.3 243.4,552.3 247.8,552.3 250.5,554.3 254.1,554.3 257.7,556.5 263.0,551.1 263.9,535.0 264.2,522.8 265.2,496.6 267.2,470.5 269.2,440.2 272.2,410.0 274.3,394.5 277.9,378.7 281.4,368.1 285.8,361.1 291.1,356.1 295.5,354.9 298.7,352.7 303.1,351.7 309.7,348.4 323.7,348.4 326.7,345.8 332.5,345.8 333.3,346.5 335.5,345.0 344.3,342.4 349.5,342.4 350.6,343.3 355.4,340.3 360.5,340.3 361.5,341.3 365.7,339.1 371.6,339.1 373.0,338.4 378.9,338.4 381.9,336.5 384.8,336.5 385.5,337.4 389.2,335.2 392.2,337.4 395.1,335.2 403.2,334.0 409.8,333.2 410.6,332.2 417.2,331.3 420.1,331.3 421.1,341.6 423.1,361.8 424.1,382.0 425.2,402.1 426.2,415.0 427.2,440.2 429.2,466.4 431.2,494.6 436.2,528.9 439.1,536.0 443.6,544.8 448.9,547.5 456.1,550.7 459.7,551.6 466.8,551.6 472.2,552.9 478.4,552.3 480.2,553.4 482.9,551.4 486.5,552.3 491.0,552.9 493.6,554.3 497.2,552.9 501.7,552.3 507.9,555.2 510.6,553.4 516.9,553.4 518.7,554.3 522.2,553.4 531.2,553.4 534.7,552.9 540.1,553.4 541.9,554.3 552.6,554.3 556.2,553.4 562.5,555.2 565.1,553.4 574.1,554.3 577.6,553.4 590.2,553.4 593.7,555.2 596.4,554.3 600.9,555.6 606.3,555.6 608.1,555.0 609.0,552.9 611.2,549.0 611.2,525.8 613.2,501.6 615.2,465.4 617.2,439.2 618.2,424.2 619.2,415.0 620.8,397.8 624.3,383.7 627.9,369.6 633.1,362.5 637.6,358.1 640.2,357.6 644.6,353.7 649.0,350.6 653.7,351.3 660.5,350.5 663.7,347.5 670.0,347.5 671.6,348.4 673.1,346.5 676.3,346.3 677.3,347.5 679.4,345.2 684.7,345.2 686.8,344.4 688.9,343.3 692.1,343.3 693.1,342.3 698.4,342.3 700.0,341.3 708.9,341.3 710.5,340.4 713.1,340.4 714.1,339.5 719.4,339.5 721.5,338.4 723.6,337.4 736.8,337.4 739.4,335.5 746.0,335.5" fill="none" stroke="#00d4dc" stroke-width="1" shape-rendering="crispEdges"/><path d="M392.6 138 H405.4 L399 150.8 Z" fill="#fff" shape-rendering="auto"/><path d="M52 556 V567.5 L64 561.7 Z" fill="#0ff" stroke="#fff" stroke-width="0.6" shape-rendering="auto"/><path d="M746.6 556 V567.5 L735 561.7 Z" fill="#ff0" stroke="#fff" stroke-width="0.6" shape-rendering="auto"/></svg>
<div class="t" style="left:14px;top:139px;color:#0ff;font-size:11px;">7</div>
<div class="t" style="left:14px;top:198px;color:#0ff;font-size:11px;">6</div>
<div class="t" style="left:14px;top:258px;color:#0ff;font-size:11px;">5</div>
<div class="t" style="left:14px;top:317px;color:#0ff;font-size:11px;">4</div>
<div class="t" style="left:14px;top:377px;color:#0ff;font-size:11px;">3</div>
<div class="t" style="left:14px;top:435px;color:#0ff;font-size:11px;">2</div>
<div class="t" style="left:14px;top:494px;color:#0ff;font-size:11px;">1</div>
<div class="t" style="left:14px;top:553px;color:#0ff;font-size:11px;">0</div>
<div class="t" style="left:14px;top:612px;color:#0ff;font-size:11px;">-1</div>
<div class="t" style="left:14px;top:672px;color:#0ff;font-size:11px;">-2</div>
<div class="t" style="left:14px;top:731px;color:#0ff;font-size:11px;">-3</div>
<div class="t" style="left:29px;top:123px;color:#0ff;font-size:11px;">V</div>
<div class="t" style="left:42px;top:749px;color:#fff;font-size:11px;">-1 us</div>
<div class="t" style="left:110px;top:749px;color:#fff;font-size:11px;">-0.8 us</div>
<div class="t" style="left:178px;top:749px;color:#fff;font-size:11px;">-0.6 us</div>
<div class="t" style="left:246px;top:749px;color:#fff;font-size:11px;">-0.4 us</div>
<div class="t" style="left:315px;top:749px;color:#fff;font-size:11px;">-0.2 us</div>
<div class="t" style="left:384px;top:749px;color:#fff;font-size:11px;">0 us</div>
<div class="t" style="left:452px;top:749px;color:#fff;font-size:11px;">0.2 us</div>
<div class="t" style="left:520px;top:749px;color:#fff;font-size:11px;">0.4 us</div>
<div class="t" style="left:589px;top:749px;color:#fff;font-size:11px;">0.6 us</div>
<div class="t" style="left:658px;top:749px;color:#fff;font-size:11px;">0.8 us</div>
<div class="t" style="left:726px;top:749px;color:#fff;font-size:11px;">1 us</div>
<div class="btn" style="left:12px;top:744px;width:18px;height:20px;"><svg style="position:absolute;left:3px;top:5px" width="9" height="9"><path d="M1.5 1.5 L7.5 8 M7.5 1.5 L1.5 8" stroke="#000" stroke-width="2.3"/></svg></div>
<div class="btn" style="left:30px;top:744px;width:12px;height:20px;"><div style="position:absolute;left:1px;top:6px;width:0;height:0;border-left:4px solid transparent;border-right:4px solid transparent;border-top:5px solid #000"></div></div>
<div style="left:10px;top:764px;width:941px;height:1px;background:#808080;"></div>
<div style="left:10px;top:765px;width:941px;height:1px;background:#404040;"></div>
<div style="left:767px;top:763px;width:184px;height:1px;background:#808080;"></div>
<div style="left:767px;top:118px;width:184px;height:1px;background:#fff;"></div>
<div style="left:767px;top:118px;width:1px;height:645px;background:#fff;"></div>
<div style="left:770px;top:137px;width:160px;height:69px;border:4px solid #fff;background:#d6d3ce"></div>
<div style="left:774px;top:143px;width:13px;height:13px;background:#fff;border:1px solid;border-color:#808080 #fff #fff #808080;box-shadow:inset 1px 1px #404040,inset -1px -1px #d6d3ce"><svg style="position:absolute;left:2px;top:2px" width="8" height="8"><path d="M0.5 3.5 L3 6 L7.5 1" stroke="#000" stroke-width="1.6" fill="none"/></svg></div>
<div class="t" style="left:792px;top:145px;color:#000;font-size:11px;">Time</div>
<div class="btn" style="left:903px;top:141px;width:23px;height:18px"><svg style="position:absolute;left:4px;top:2px" width="12" height="12" viewBox="0 0 13 13"><defs><linearGradient id="gg" x1="0" y1="0" x2="1" y2="1"><stop offset="0" stop-color="#f4f6f8"/><stop offset="0.6" stop-color="#c4ccd4"/><stop offset="1" stop-color="#7a8896"/></linearGradient></defs><path d="M10.78 5.10 L12.66 5.78 L12.66 7.22 L10.78 7.90 L10.51 8.53 L11.36 10.35 L10.35 11.36 L8.53 10.51 L7.90 10.78 L7.22 12.66 L5.78 12.66 L5.10 10.78 L4.47 10.51 L2.65 11.36 L1.64 10.35 L2.49 8.53 L2.22 7.90 L0.34 7.22 L0.34 5.78 L2.22 5.10 L2.49 4.47 L1.64 2.65 L2.65 1.64 L4.47 2.49 L5.10 2.22 L5.78 0.34 L7.22 0.34 L7.90 2.22 L8.53 2.49 L10.35 1.64 L11.36 2.65 L10.51 4.47Z" fill="url(#gg)" stroke="#6a7a88" stroke-width="0.8"/><circle cx="6.5" cy="6.5" r="2.7" fill="#2e4252"/><circle cx="7.4" cy="6.0" r="1.7" fill="#c8d0c4"/></svg></div>
<div class="t" style="left:777px;top:164px;color:#000;font-size:11px;">Position:</div>
<div class="cmb" style="left:837px;top:160px;width:87px;height:19px;"><div class="cin" style="width:84px;height:16px"></div><div class="dbtn" style="width:16px;height:16px"><svg style="position:absolute;left:3px;top:5px" width="7" height="4"><path d="M0 0H7L3.5 4Z" fill="#000"/></svg></div><div class="t" style="left:4px;top:4px">0 s</div></div>
<div class="t" style="left:777px;top:184px;color:#000;font-size:11px;">Base:</div>
<div class="cmb" style="left:837px;top:181px;width:87px;height:19px;"><div class="cin" style="width:84px;height:16px"></div><div class="dbtn" style="width:16px;height:16px"><svg style="position:absolute;left:3px;top:5px" width="7" height="4"><path d="M0 0H7L3.5 4Z" fill="#000"/></svg></div><div class="t" style="left:4px;top:4px">200 ns/div</div></div>
<div class="btn" style="left:770px;top:207px;width:160px;height:23px;"><div class="t" style="left:42px;top:4px">Add Channel</div><div style="position:absolute;left:147px;top:10px;width:0;height:0;border-left:3px solid transparent;border-right:3px solid transparent;border-top:3px solid #000"></div></div>
<div style="left:770px;top:230px;width:160px;height:70px;border:4px solid #ff0;background:#d6d3ce;box-shadow:inset 1px 1px #e6e4ee"></div>
<div style="left:774px;top:237px;width:13px;height:13px;background:#fff;border:1px solid;border-color:#808080 #fff #fff #808080;box-shadow:inset 1px 1px #404040,inset -1px -1px #d6d3ce"><svg style="position:absolute;left:2px;top:2px" width="8" height="8"><path d="M0.5 3.5 L3 6 L7.5 1" stroke="#000" stroke-width="1.6" fill="none"/></svg></div>
<div class="t" style="left:792px;top:239px;color:#000;font-size:11px;">Channel 1</div>
<div class="btn" style="left:903px;top:235px;width:23px;height:18px"><svg style="position:absolute;left:4px;top:2px" width="12" height="12" viewBox="0 0 13 13"><defs><linearGradient id="gg" x1="0" y1="0" x2="1" y2="1"><stop offset="0" stop-color="#f4f6f8"/><stop offset="0.6" stop-color="#c4ccd4"/><stop offset="1" stop-color="#7a8896"/></linearGradient></defs><path d="M10.78 5.10 L12.66 5.78 L12.66 7.22 L10.78 7.90 L10.51 8.53 L11.36 10.35 L10.35 11.36 L8.53 10.51 L7.90 10.78 L7.22 12.66 L5.78 12.66 L5.10 10.78 L4.47 10.51 L2.65 11.36 L1.64 10.35 L2.49 8.53 L2.22 7.90 L0.34 7.22 L0.34 5.78 L2.22 5.10 L2.49 4.47 L1.64 2.65 L2.65 1.64 L4.47 2.49 L5.10 2.22 L5.78 0.34 L7.22 0.34 L7.90 2.22 L8.53 2.49 L10.35 1.64 L11.36 2.65 L10.51 4.47Z" fill="url(#gg)" stroke="#6a7a88" stroke-width="0.8"/><circle cx="6.5" cy="6.5" r="2.7" fill="#2e4252"/><circle cx="7.4" cy="6.0" r="1.7" fill="#c8d0c4"/></svg></div>
<div class="t" style="left:777px;top:258px;color:#000;font-size:11px;">Offset:</div>
<div class="cmb" style="left:837px;top:254px;width:87px;height:19px;"><div class="cin" style="width:84px;height:16px"></div><div class="dbtn" style="width:16px;height:16px"><svg style="position:absolute;left:3px;top:5px" width="7" height="4"><path d="M0 0H7L3.5 4Z" fill="#000"/></svg></div><div class="t" style="left:4px;top:4px">-2 V</div></div>
<div class="t" style="left:777px;top:278px;color:#000;font-size:11px;">Range:</div>
<div class="cmb" style="left:837px;top:275px;width:87px;height:19px;"><div class="cin" style="width:84px;height:16px"></div><div class="dbtn" style="width:16px;height:16px"><svg style="position:absolute;left:3px;top:5px" width="7" height="4"><path d="M0 0H7L3.5 4Z" fill="#000"/></svg></div><div class="t" style="left:4px;top:4px">1 V/div</div></div>
<div style="left:770px;top:300px;width:160px;height:70px;border:4px solid #0ff;background:#d6d3ce;box-shadow:inset 1px 1px #e6e4ee"></div>
<div style="left:774px;top:307px;width:13px;height:13px;background:#fff;border:1px solid;border-color:#808080 #fff #fff #808080;box-shadow:inset 1px 1px #404040,inset -1px -1px #d6d3ce"><svg style="position:absolute;left:2px;top:2px" width="8" height="8"><path d="M0.5 3.5 L3 6 L7.5 1" stroke="#000" stroke-width="1.6" fill="none"/></svg></div>
<div class="t" style="left:792px;top:309px;color:#000;font-size:11px;">Channel 2</div>
<div class="btn" style="left:903px;top:305px;width:23px;height:18px"><svg style="position:absolute;left:4px;top:2px" width="12" height="12" viewBox="0 0 13 13"><defs><linearGradient id="gg" x1="0" y1="0" x2="1" y2="1"><stop offset="0" stop-color="#f4f6f8"/><stop offset="0.6" stop-color="#c4ccd4"/><stop offset="1" stop-color="#7a8896"/></linearGradient></defs><path d="M10.78 5.10 L12.66 5.78 L12.66 7.22 L10.78 7.90 L10.51 8.53 L11.36 10.35 L10.35 11.36 L8.53 10.51 L7.90 10.78 L7.22 12.66 L5.78 12.66 L5.10 10.78 L4.47 10.51 L2.65 11.36 L1.64 10.35 L2.49 8.53 L2.22 7.90 L0.34 7.22 L0.34 5.78 L2.22 5.10 L2.49 4.47 L1.64 2.65 L2.65 1.64 L4.47 2.49 L5.10 2.22 L5.78 0.34 L7.22 0.34 L7.90 2.22 L8.53 2.49 L10.35 1.64 L11.36 2.65 L10.51 4.47Z" fill="url(#gg)" stroke="#6a7a88" stroke-width="0.8"/><circle cx="6.5" cy="6.5" r="2.7" fill="#2e4252"/><circle cx="7.4" cy="6.0" r="1.7" fill="#c8d0c4"/></svg></div>
<div class="t" style="left:777px;top:328px;color:#000;font-size:11px;">Offset:</div>
<div class="cmb" style="left:837px;top:324px;width:87px;height:19px;"><div class="cin" style="width:84px;height:16px"></div><div class="dbtn" style="width:16px;height:16px"><svg style="position:absolute;left:3px;top:5px" width="7" height="4"><path d="M0 0H7L3.5 4Z" fill="#000"/></svg></div><div class="t" style="left:4px;top:4px">-2 V</div></div>
<div class="t" style="left:777px;top:348px;color:#000;font-size:11px;">Range:</div>
<div class="cmb" style="left:837px;top:345px;width:87px;height:19px;"><div class="cin" style="width:84px;height:16px"></div><div class="dbtn" style="width:16px;height:16px"><svg style="position:absolute;left:3px;top:5px" width="7" height="4"><path d="M0 0H7L3.5 4Z" fill="#000"/></svg></div><div class="t" style="left:4px;top:4px">1 V/div</div></div>
<div style="left:933px;top:136px;width:16px;height:626px;background-color:#d6d3ce;background-image:linear-gradient(45deg,#fff 25%,transparent 25%,transparent 75%,#fff 75%),linear-gradient(45deg,#fff 25%,transparent 25%,transparent 75%,#fff 75%);background-size:2px 2px;background-position:0 0,1px 1px"></div>
<div class="btn2" style="left:933px;top:136px;width:16px;height:16px"><div style="position:absolute;left:3px;top:4px;width:0;height:0;border-left:4px solid transparent;border-right:4px solid transparent;border-bottom:4px solid #808080"></div></div>
<div class="btn2" style="left:933px;top:746px;width:16px;height:16px"><div style="position:absolute;left:3px;top:5px;width:0;height:0;border-left:4px solid transparent;border-right:4px solid transparent;border-top:4px solid #808080"></div></div>
<div style="left:10px;top:768px;width:65px;height:21px;border:1px solid;border-color:#808080 #fff #fff #808080"><div class="btn" style="left:0;top:0;width:63px;height:19px"></div></div>
<div class="t" style="left:18px;top:773px;color:#000;letter-spacing:-0.3px;font-size:11px;">Trigger PC</div>
<div style="left:656px;top:768px;width:163px;height:21px;border:1px solid;border-color:#808080 #fff #fff #808080"><div class="btn" style="left:0;top:0;width:161px;height:19px"></div></div>
<div class="t" style="left:664px;top:773px;color:#000;font-size:11px;letter-spacing:-0.2px">Discovery2 SN:210321A195D7</div>
<div style="left:822px;top:768px;width:83px;height:21px;border:1px solid;border-color:#808080 #fff #fff #808080"><div class="btn" style="left:0;top:0;width:81px;height:19px"></div></div>
<div class="t" style="left:838px;top:773px;color:#000;font-size:11px;">Status: OK</div>
<div style="left:908px;top:768px;width:27px;height:21px;border:1px solid;border-color:#808080 #fff #fff #808080"><div class="btn" style="left:0;top:0;width:25px;height:19px"><svg style="position:absolute;left:4px;top:2px" width="12" height="12" viewBox="0 0 13 13"><defs><linearGradient id="gg" x1="0" y1="0" x2="1" y2="1"><stop offset="0" stop-color="#f4f6f8"/><stop offset="0.6" stop-color="#c4ccd4"/><stop offset="1" stop-color="#7a8896"/></linearGradient></defs><path d="M10.78 5.10 L12.66 5.78 L12.66 7.22 L10.78 7.90 L10.51 8.53 L11.36 10.35 L10.35 11.36 L8.53 10.51 L7.90 10.78 L7.22 12.66 L5.78 12.66 L5.10 10.78 L4.47 10.51 L2.65 11.36 L1.64 10.35 L2.49 8.53 L2.22 7.90 L0.34 7.22 L0.34 5.78 L2.22 5.10 L2.49 4.47 L1.64 2.65 L2.65 1.64 L4.47 2.49 L5.10 2.22 L5.78 0.34 L7.22 0.34 L7.90 2.22 L8.53 2.49 L10.35 1.64 L11.36 2.65 L10.51 4.47Z" fill="url(#gg)" stroke="#6a7a88" stroke-width="0.8"/><circle cx="6.5" cy="6.5" r="2.7" fill="#2e4252"/><circle cx="7.4" cy="6.0" r="1.7" fill="#c8d0c4"/></svg></div></div>
<svg style="left:935px;top:776px" width="16" height="16"><path d="M15 3 L3 15 M15 7 L7 15 M15 11 L11 15" stroke="#808080" stroke-width="1.2"/><path d="M15 4.5 L4.5 15 M15 8.5 L8.5 15 M15 12.5 L12.5 15" stroke="#fff" stroke-width="1"/></svg>
<div style="left:6px;top:792px;width:945px;height:1px;background:#808080;"></div>
<div style="left:6px;top:793px;width:945px;height:1px;background:#404040;"></div>
</body></html>
